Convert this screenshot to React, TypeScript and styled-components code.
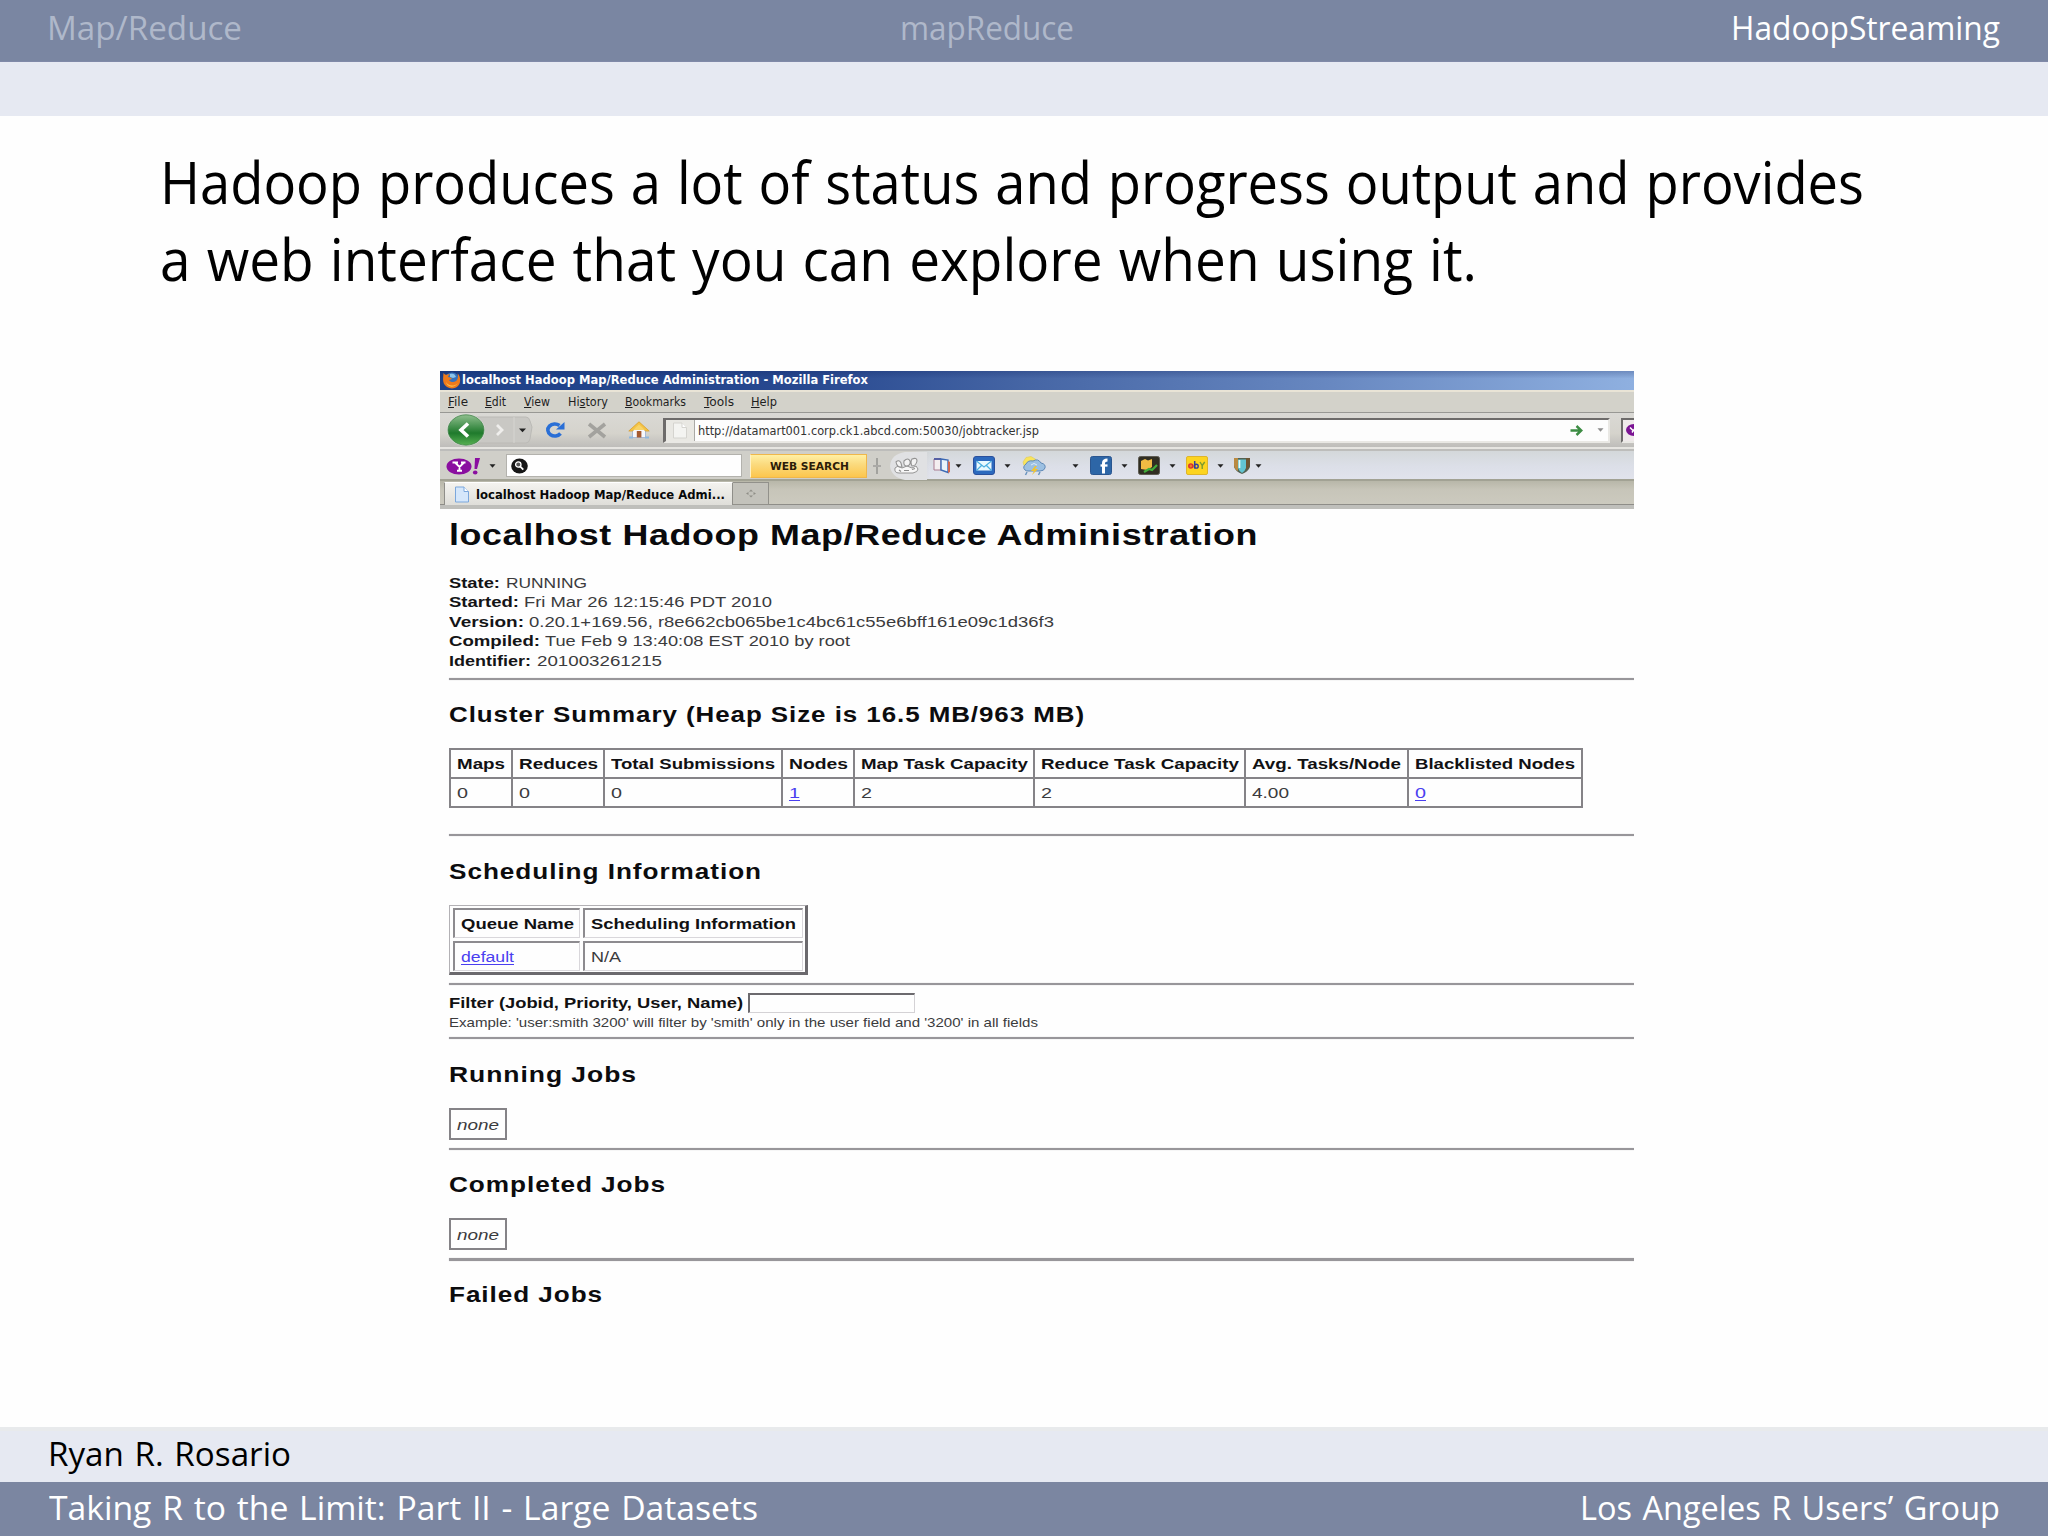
import React, { useLayoutEffect, useRef, useState } from 'react';
import styled, { createGlobalStyle, css } from 'styled-components';

const Global = createGlobalStyle`
  html, body { margin: 0; padding: 0; background: #fefefe; }
  body { overflow: hidden; }
  *, *::before, *::after { box-sizing: border-box; }
`;

/* ---------- text stretched to a set measure ---------- */

const Measure = styled.span<{ $w: number; $gap?: number }>`
  display: inline-block;
  flex: none;
  width: ${p => p.$w}px;
  margin-left: ${p => p.$gap ?? 0}px;
  white-space: pre;
  text-align: left;
`;
const Stretch = styled.span`
  display: inline-block;
  transform-origin: 0 50%;
`;

function Fit({ w, gap, children }: { w: number; gap?: number; children: React.ReactNode }) {
  const ref = useRef<HTMLSpanElement>(null);
  const [scale, setScale] = useState(1);
  useLayoutEffect(() => {
    if (!ref.current) return;
    const natural = parseFloat(getComputedStyle(ref.current).width);
    if (natural > 0) setScale(w / natural);
  }, [w]);
  return (
    <Measure $w={w} $gap={gap}>
      <Stretch ref={ref} style={{ transform: `scaleX(${scale})` }}>{children}</Stretch>
    </Measure>
  );
}

/* ---------- slide ---------- */

const Slide = styled.div`
  width: 2048px;
  height: 1536px;
  display: flex;
  flex-direction: column;
  overflow: hidden;
  background: #fefefe;
  color: #000;
  font-family: 'Open Sans', 'Noto Sans', sans-serif;
  word-spacing: 0.12em;
`;
const bar = css`
  flex: none;
  display: flex;
  align-items: center;
  font-size: 32px;
  line-height: 46px;
`;
const HeaderBar = styled.header`
  ${bar}
  height: 62px;
  padding: 0 48px 5px 47px;
  background: #7a86a2;
  border-bottom: 1px solid #8089a8;
  color: #fff;
`;
const Section = styled.span<{ $dim?: boolean }>`
  display: flex;
  margin-left: auto;
  color: ${p => (p.$dim ? '#afb8ca' : '#fff')};
  &:first-child { margin-left: 0; }
`;
const SubBar = styled.div`
  flex: none;
  height: 54px;
  background: #e6e9f2;
`;
const Main = styled.main`
  flex: 1;
  display: flex;
  flex-direction: column;
`;
const Lead = styled.p`
  margin: 27px 0 0 160px;
  height: 153px;
  font-size: 58px;
  line-height: 77px;
  display: flex;
  flex-direction: column;
`;
const AuthorBar = styled.div`
  ${bar}
  height: 55px;
  padding: 0 48px 6px;
  background: #e6e9f2;
  border-top: 4px solid #e8eaec;
`;
const FooterBar = styled.footer`
  ${bar}
  height: 54px;
  padding: 0 48px 2px 49px;
  justify-content: space-between;
  background: #7b86a1;
  color: #fff;
`;

/* ---------- browser window ---------- */

const Browser = styled.section`
  flex: none;
  width: 1194px;
  margin: 75px 0 0 440px;
  display: flex;
  flex-direction: column;
  overflow: hidden;
  font-family: 'DejaVu Sans', sans-serif;
  font-size: 12px;
  word-spacing: 0;
`;
const TitleBar = styled.div`
  height: 19px;
  display: flex;
  align-items: center;
  padding-bottom: 1px;
  background: linear-gradient(180deg, rgba(10, 30, 90, 0.25), transparent 40%),
    linear-gradient(90deg, #1e4189 0%, #27488f 30%, #4767a6 50%, #6787c0 74%, #8fb0e0 100%);
  color: #fff;
  font-weight: bold;
  font-size: 11.5px;
  line-height: 18px;
`;
const MenuBar = styled.nav`
  height: 23px;
  display: flex;
  align-items: center;
  padding-bottom: 1px;
  background: #d3d2ca;
  border-top: 2px solid #e9e4d6;
  border-bottom: 1px solid #989894;
  color: #1e1e1e;
  line-height: 18px;
  u { text-decoration-thickness: 1px; text-underline-offset: 1px; }
`;
const NavBar = styled.div`
  height: 36px;
  display: flex;
  align-items: center;
  background: linear-gradient(180deg, #dad9d5 0%, #d5d3cc 60%, #bebdba 100%);
  border-bottom: 2px solid #e6e5e1;
`;
const Slot = styled.span<{ $w: number; $gap?: number }>`
  flex: none;
  width: ${p => p.$w}px;
  margin-left: ${p => p.$gap ?? 0}px;
  display: flex;
  align-items: center;
  svg { display: block; }
`;
const field = css`
  flex: none;
  display: flex;
  align-items: center;
  background: #fdfdfd;
  border: 2px solid #6d6b6a;
  border-right-color: #e9e8e4;
  border-bottom-color: #e9e8e4;
`;
const UrlField = styled.div`
  ${field}
  width: 947px;
  height: 25px;
  margin-left: 4px;
  border-left-width: 3px;
  color: #333;
  font-size: 12px;
  line-height: 18px;
`;
const UrlText = styled.span`
  display: flex;
  padding-top: 2px;
`;
const SiteIcon = styled.span`
  width: 29px;
  height: 100%;
  display: flex;
  align-items: center;
  justify-content: center;
  background: #e9e8e3;
  border-right: 1px solid #aaa9a5;
`;
const SideField = styled.div`
  ${field}
  width: 60px;
  height: 25px;
  margin-left: 11px;
  background: #efe9ea;
`;
const SearchBar = styled.div`
  height: 32px;
  display: flex;
  align-items: center;
  padding-top: 1px;
  background: linear-gradient(90deg, #d0cfc9 0, #d0cfc9 470px, transparent 490px),
    linear-gradient(180deg, #d4d8da 0%, #dcdfe8 55%, #e1e3ec 100%);
  border-top: 2px solid #bdbdbb;
  border-bottom: 2px solid #a2a294;
`;
const SearchField = styled.div`
  width: 236px;
  height: 23px;
  margin-left: 7px;
  padding-left: 4px;
  display: flex;
  align-items: center;
  background: #fefefe;
  border: 1px solid #b3b2ad;
`;
const SearchButton = styled.div`
  width: 117px;
  height: 24px;
  margin-left: 8px;
  padding-left: 2px;
  display: flex;
  align-items: center;
  justify-content: center;
  background: linear-gradient(180deg, #fff0a4 0%, #fbdb80 40%, #fcc64d 100%);
  border: 1px solid #efb74b;
  border-left-color: #fff1c5;
  color: #2b1c09;
  font-weight: bold;
  font-size: 10.5px;
  line-height: 20px;
`;
const TabStrip = styled.div`
  height: 28px;
  display: flex;
  align-items: flex-end;
  padding-left: 4px;
  background: linear-gradient(180deg, #b8b7a9 0%, #c7c5b9 35%, #cccabf 100%);
  border-bottom: 4px solid #bfbfbb;
  box-shadow: inset 0 -1px 0 #8e8d88;
`;
const Tab = styled.div`
  width: 289px;
  height: 23px;
  padding: 1px 0 0 9px;
  display: flex;
  align-items: center;
  background: linear-gradient(180deg, #f4f3ef 0%, #dfded9 100%);
  border: 1px solid #8f8e89;
  border-bottom: 0;
  border-top-color: #fff;
  color: #080808;
  font-weight: bold;
  font-size: 11.5px;
  line-height: 18px;
`;
const NewTab = styled.div`
  width: 36px;
  height: 23px;
  display: flex;
  align-items: center;
  justify-content: center;
  background: #c3c2bb;
  border: 1px solid #92918b;
  border-left: 0;
`;

/* ---------- Hadoop page ---------- */

const Page = styled.div`
  padding: 9px 0 0 9px;
  display: flex;
  flex-direction: column;
  align-items: flex-start;
  background: #fefefe;
  color: #3b3b3d;
  font-family: 'Liberation Sans', Arial, sans-serif;
  font-size: 15.5px;
`;
const H1 = styled.h1`
  margin: 0;
  height: 34px;
  line-height: 34px;
  font-size: 30px;
  letter-spacing: 0.5px;
  color: #0a0a0c;
`;
const H2 = styled.h2<{ $top: number }>`
  margin: ${p => p.$top}px 0 0;
  height: 28px;
  line-height: 28px;
  font-size: 22px;
  letter-spacing: 0.8px;
  color: #0c0c0e;
`;
const Facts = styled.div`
  margin-top: 21px;
  height: 97px;
  display: grid;
  grid-auto-rows: 19.4px;
  line-height: 19.4px;
`;
const Fact = styled.div`
  display: flex;
  b { color: #141416; }
`;
const Rule = styled.hr<{ $top: number; $h?: number }>`
  align-self: stretch;
  margin: ${p => p.$top}px 0 0;
  height: ${p => p.$h ?? 2}px;
  border: 0;
  background: #98969a;
  box-shadow: 0 0 1px #aaa8ac;
`;
const Summary = styled.table`
  margin-top: 19px;
  width: 1133px;
  height: 59px;
  table-layout: fixed;
  border-collapse: collapse;
  border: 2px solid #858387;
  th, td {
    padding: 0 0 0 6px;
    border: 2px solid #858387;
    text-align: left;
    line-height: 20px;
    height: 29px;
  }
  th { color: #111113; }
`;
const Col = styled.col<{ $w: number }>`
  width: ${p => p.$w}px;
`;
const Link = styled.a`
  color: #4a3ff0;
  text-decoration: underline;
  text-decoration-thickness: 1px;
  text-underline-offset: 2px;
`;
const Queues = styled.div`
  margin-top: 19px;
  width: 359px;
  height: 70px;
  display: grid;
  grid-template-columns: 127px 220px;
  grid-template-rows: 30px 30px;
  gap: 3px;
  padding: 2px 3px;
  border: 1px solid #b3b1b5;
  border-right: 3px solid #6b696d;
  border-bottom: 3px solid #6b696d;
`;
const QueueCell = styled.div<{ $head?: boolean }>`
  display: flex;
  align-items: center;
  padding: 1px 0 0 6px;
  border: 1px solid #d9d7db;
  border-top: 2px solid #8d8b8f;
  border-left: 2px solid #8d8b8f;
  line-height: 20px;
  ${p => p.$head && css`color: #111113; font-weight: bold;`}
`;
const FilterRow = styled.div`
  margin-top: 8px;
  height: 20px;
  display: flex;
  line-height: 20px;
  font-weight: bold;
  color: #111113;
`;
const FilterInput = styled.span`
  width: 167px;
  height: 20px;
  margin-left: 5px;
  border: 1px solid #d4d2d5;
  border-top: 2px solid #6c6a6e;
  border-left: 2px solid #6c6a6e;
`;
const Hint = styled.div`
  margin-top: 1px;
  height: 18px;
  line-height: 18px;
  font-size: 13.3px;
`;
const EmptyBox = styled.div`
  margin-top: 19px;
  width: 58px;
  height: 32px;
  padding: 0 0 0 6px;
  border: 2px solid #858387;
  line-height: 29px;
  font-style: italic;
`;

/* ---------- icons ---------- */

const Caret = ({ color = '#222' }: { color?: string }) => (
  <svg width="7" height="4" viewBox="0 0 7 4"><path d="M0.5 0.3h6L3.5 3.8z" fill={color} /></svg>
);
const FirefoxIcon = () => (
  <svg width="19" height="18" viewBox="0 0 19 18">
    <circle cx="10" cy="8.6" r="7.2" fill="#3672bd" />
    <path d="M8 3c3-1 5 0 6 3l-3 1-3-1z" fill="#8cc4ea" />
    <path d="M1.500 2C1 8 0 13 5 16c5 3 12 1 13-5 .6-4-.6-7-2.500-8.500 1 3 .5 6-1.500 7.500-2.500 2-6 1-7-1l3-1c-1-2-3-1.500-4-2 0-1 1-2 2-2.500C6 3 5 3.500 4 4 3 3.500 2.500 3 1.500 2z" fill="#ee7a1c" />
    <path d="M4 11c2 4 8 5 12 1-3 5-11 5-12-1z" fill="#fdc04b" />
  </svg>
);
const BackForward = () => (
  <svg width="88" height="34" viewBox="0 0 88 34">
    <defs>
      <linearGradient id="back" x1="0" y1="0" x2="0" y2="1">
        <stop offset="0" stopColor="#8fbf8e" />
        <stop offset=".45" stopColor="#3b8b45" />
        <stop offset=".6" stopColor="#1f7a2c" />
        <stop offset="1" stopColor="#57b052" />
      </linearGradient>
    </defs>
    <path d="M30 4h50q3 0 4 4l2 6-2 12q-1 4-4 4H30z" fill="#c9c8c4" stroke="#bbbab6" />
    <path d="M68 4v26" stroke="#d6d5d1" />
    <ellipse cx="20" cy="17" rx="19" ry="16" fill="#e2e5df" />
    <ellipse cx="20" cy="17" rx="18" ry="15.200" fill="url(#back)" stroke="#43814a" strokeWidth=".8" />
    <path d="M22 10.500l-7 6.500 7 6.500" fill="none" stroke="#fff" strokeWidth="3.600" />
    <path d="M51 12l5 5-5 5" fill="none" stroke="#efeeec" strokeWidth="2.800" />
    <path d="M73 15.500h7l-3.500 3.800z" fill="#222" />
  </svg>
);
const ReloadIcon = () => (
  <svg width="22" height="18" viewBox="0 0 22 18">
    <path d="M15.500 12.500A7 6 0 1 1 14.500 4.500" fill="none" stroke="#2a6fd6" strokeWidth="3.600" />
    <path d="M11 8.500h8.500V1z" fill="#2a6fd6" />
  </svg>
);
const StopIcon = () => (
  <svg width="20" height="17" viewBox="0 0 20 17">
    <path d="M2 2l16 13M18 2L2 15" stroke="#a3a29e" strokeWidth="3.600" />
  </svg>
);
const HomeIcon = () => (
  <svg width="22" height="18" viewBox="0 0 22 18">
    <path d="M4.500 8h13v8.500h-13z" fill="#f7f8fc" stroke="#a9bad6" />
    <path d="M11 0.800L0.800 10h3.500L11 4.800 17.700 10h3.500z" fill="#f5c445" stroke="#d9a02c" strokeWidth=".8" />
    <path d="M11 3.500L5 9h12z" fill="#f8d469" />
    <path d="M8.800 10h4.600v6.500H8.800z" fill="#a65a30" />
    <path d="M1 16.500h4M17 16.500h4" stroke="#8fb7dd" strokeWidth="2" />
  </svg>
);
const SheetIcon = ({ fill, stroke }: { fill: string; stroke: string }) => (
  <svg width="16" height="17" viewBox="0 0 16 17">
    <path d="M1.500 1h8.500l4.500 4.500V16h-13z" fill={fill} stroke={stroke} />
    <path d="M10 1v4.500h4.500" fill="#fff" stroke={stroke} />
  </svg>
);
const GoIcon = () => (
  <svg width="13" height="11" viewBox="0 0 13 11">
    <path d="M0.500 5.500H10M6.500 1l4.800 4.500L6.500 10" fill="none" stroke="#3c8c43" strokeWidth="2.400" />
  </svg>
);
const YBadge = () => (
  <svg width="18" height="12" viewBox="0 0 18 12">
    <ellipse cx="9" cy="6" rx="8" ry="6" fill="#7b1393" />
    <path d="M5 3.500l3 3M11 3L7 8.500" stroke="#fff" strokeWidth="1.500" />
  </svg>
);
const YahooIcon = () => (
  <svg width="36" height="18" viewBox="0 0 36 18">
    <ellipse cx="13" cy="9.500" rx="12.500" ry="8" fill="#8a0ea0" />
    <path d="M6.500 5.500h5.500M15 5.500h4.500M9 5.500l4.500 4.500 4.500-4.500M13.500 9.500v4M11 13.700h5" fill="none" stroke="#fff" strokeWidth="1.900" />
    <path d="M29 1h5l-3 11h-2.500z" fill="#8a0ea0" />
    <ellipse cx="29.200" cy="15.500" rx="2.300" ry="2" fill="#8a0ea0" />
  </svg>
);
const MagnifierIcon = () => (
  <svg width="17" height="16" viewBox="0 0 17 16">
    <ellipse cx="8.500" cy="8" rx="8.300" ry="7.500" fill="#161616" />
    <circle cx="7.300" cy="6.500" r="2.700" fill="#555" stroke="#fff" strokeWidth="1.300" />
    <path d="M9.300 8.700l3 3" stroke="#fff" strokeWidth="1.800" />
  </svg>
);
const GripIcon = () => (
  <svg width="10" height="18" viewBox="0 0 10 18">
    <path d="M5 1v16" stroke="#8f8f8c" strokeWidth="1.400" /><path d="M1 9h8" stroke="#aaa9a6" strokeWidth="2" />
  </svg>
);
const PencilIcon = () => (
  <svg width="37" height="28" viewBox="0 0 37 28">
    <path d="M37 0H15Q1 2 0 14q1 11 15 14h22z" fill="#e0e1e3" />
    <path d="M5 16q-1 5 4 5h14q5-1 5-4l-2-3-4 2-5-2-5 2-4-2z" fill="#f7f7f7" stroke="#949494" />
    <path d="M6 10q3-3 5 1l1 4q-5 1-6-5zM14 9q4-4 6 0 1 4-3 5-4 0-3-5zM22 7q5-2 5 2-1 5-5 5-2-4 0-7z" fill="#f3f3f3" stroke="#929292" strokeWidth="1.100" />
    <path d="M9 18l2 1.500M14 18.500h5M22 17.500l3-1" fill="none" stroke="#8c8c8c" strokeWidth="1.200" />
  </svg>
);
const BookIcon = () => (
  <svg width="18" height="17" viewBox="0 0 18 17">
    <path d="M1 2h7v11H1z" fill="#f4eef0" stroke="#a97c91" />
    <path d="M1 2h7" stroke="#5660a4" strokeWidth="2" />
    <path d="M8 2l7 1v12.500l-7-2.500z" fill="#e9f3fb" stroke="#3c69b4" strokeWidth="1.400" />
    <path d="M15 4l2 1v10l-2 1z" fill="#d2684f" />
  </svg>
);
const MailIcon = () => (
  <svg width="22" height="19" viewBox="0 0 22 19">
    <rect x=".5" y=".5" width="21" height="18" rx="2.500" fill="#2c69be" stroke="#2a509c" />
    <path d="M3.500 5h15v9.500h-15z" fill="#eafaff" />
    <path d="M3.500 5l7.500 6 7.500-6M3.500 14.500l5-5M18.500 14.500l-5-5" fill="none" stroke="#4bb0e0" strokeWidth="1.200" />
  </svg>
);
const WeatherIcon = () => (
  <svg width="24" height="20" viewBox="0 0 24 20">
    <path d="M1 6l3-4.500 5-1 5 3-5 5-7 1z" fill="#f9e45c" stroke="#ddc957" strokeWidth=".6" />
    <path d="M3 14q-3-3 1-6 2-4 7-3 5-3 8 2 5 1 4 5-1 3-5 3H6q-2 0-3-1z" fill="#9cc0e2" stroke="#6089b6" />
    <path d="M9 9q3-3 6 0" fill="none" stroke="#dcebf7" />
    <path d="M13 10l-4 5h3l-2 4 6-6h-3l2-3z" fill="#f0c434" />
    <path d="M5 16l-1.500 3M18 16l-1.500 3" stroke="#6b95bf" strokeWidth="1.500" />
  </svg>
);
const FacebookIcon = () => (
  <svg width="22" height="19" viewBox="0 0 22 19">
    <rect x=".5" y=".5" width="21" height="18" rx="2" fill="#2d66a7" stroke="#2a5690" />
    <path d="M13.500 17.500V7q0-3 4-3" fill="none" stroke="#fff" strokeWidth="3" />
    <path d="M10.500 9.500h7" stroke="#fff" strokeWidth="2.300" />
  </svg>
);
const FinanceIcon = () => (
  <svg width="22" height="19" viewBox="0 0 22 19">
    <rect x=".5" y=".5" width="21" height="18" rx="2" fill="#302e22" stroke="#5d5b52" />
    <path d="M3 5l4-2 3 1.500L14 3v8l-5 3-6-1z" fill="#f1bb43" />
    <path d="M6 16l5-3 3 1 5-5" fill="none" stroke="#41ad3a" strokeWidth="2.200" />
  </svg>
);
const EbayIcon = () => (
  <svg width="22" height="19" viewBox="0 0 22 19">
    <rect x=".5" y=".5" width="21" height="18" rx="1.500" fill="#fcd41f" stroke="#dfb52a" />
    <circle cx="4.800" cy="10" r="2" fill="none" stroke="#dc3030" strokeWidth="1.500" /><path d="M3 10h3.500" stroke="#dc3030" />
    <path d="M8.700 5v7.500" stroke="#313f9f" strokeWidth="1.500" /><circle cx="10.300" cy="10.200" r="1.900" fill="none" stroke="#313f9f" strokeWidth="1.400" />
    <path d="M14 6l2.200 3.500L18.700 6M16.200 9v4" fill="none" stroke="#7b9b30" strokeWidth="1.400" />
  </svg>
);
const ShieldIcon = () => (
  <svg width="18" height="17" viewBox="0 0 18 17">
    <path d="M1 1h16v9q-2 5-8 7-6-2-8-7z" fill="#536252" />
    <path d="M1 1h4v13q-4-2-4-6z" fill="#b98a42" />
    <path d="M5 2.500h8V11q-1 3-4 5-3-2-4-5z" fill="#62c5d2" />
    <path d="M6.500 3v8" stroke="#e8fbf8" strokeWidth="1.700" />
    <path d="M13 1h4v7q-1 3-4 5z" fill="#6d5633" />
  </svg>
);
const PlusIcon = () => (
  <svg width="12" height="9" viewBox="0 0 12 9">
    <path d="M6 .5l2 2H4zM6 8.500l2-2H4zM1 4.500l2.500-1.500v3zM11 4.500L8.500 3v3z" fill="#8f8e87" />
  </svg>
);

/* ---------- data ---------- */

const facts = [
  { label: 'State:', lw: 51, value: 'RUNNING', gap: 6, vw: 81 },
  { label: 'Started:', lw: 70, value: 'Fri Mar 26 12:15:46 PDT 2010', gap: 5, vw: 248 },
  { label: 'Version:', lw: 75, value: '0.20.1+169.56, r8e662cb065be1c4bc61c55e6bff161e09c1d36f3', gap: 5, vw: 525 },
  { label: 'Compiled:', lw: 91, value: 'Tue Feb 9 13:40:08 EST 2010 by root', gap: 5, vw: 305 },
  { label: 'Identifier:', lw: 82, value: '201003261215', gap: 6, vw: 125 },
];
const columns = [
  { name: 'Maps', col: 62, w: 48, value: '0' },
  { name: 'Reduces', col: 92, w: 79, value: '0' },
  { name: 'Total Submissions', col: 178, w: 164, value: '0' },
  { name: 'Nodes', col: 72, w: 59, value: '1', link: true },
  { name: 'Map Task Capacity', col: 180, w: 167, value: '2' },
  { name: 'Reduce Task Capacity', col: 211, w: 198, value: '2' },
  { name: 'Avg. Tasks/Node', col: 163, w: 149, value: '4.00' },
  { name: 'Blacklisted Nodes', col: 174, w: 160, value: '0', link: true },
];
const menus = [
  { pre: '', key: 'F', post: 'ile', gap: 8, w: 20 },
  { pre: '', key: 'E', post: 'dit', gap: 17, w: 21 },
  { pre: '', key: 'V', post: 'iew', gap: 18, w: 26 },
  { pre: 'Hi', key: 's', post: 'tory', gap: 18, w: 40 },
  { pre: '', key: 'B', post: 'ookmarks', gap: 17, w: 61 },
  { pre: '', key: 'T', post: 'ools', gap: 18, w: 30 },
  { pre: '', key: 'H', post: 'elp', gap: 17, w: 26 },
];

export default function App() {
  return (
    <>
      <Global />
      <Slide>
        <HeaderBar>
          <Section $dim><Fit w={195}>Map/Reduce</Fit></Section>
          <Section $dim><Fit w={174}>mapReduce</Fit></Section>
          <Section><Fit w={269}>HadoopStreaming</Fit></Section>
        </HeaderBar>
        <SubBar />
        <Main>
          <Lead>
            <Fit w={1704}>Hadoop produces a lot of status and progress output and provides</Fit>
            <Fit w={1317}>a web interface that you can explore when using it.</Fit>
          </Lead>
          <Browser>
            <TitleBar>
              <Slot $w={19} $gap={2}><FirefoxIcon /></Slot>
              <Fit w={406} gap={1}>localhost Hadoop Map/Reduce Administration - Mozilla Firefox</Fit>
            </TitleBar>
            <MenuBar>
              {menus.map(m => (
                <Fit key={m.key + m.post} w={m.w} gap={m.gap}>{m.pre}<u>{m.key}</u>{m.post}</Fit>
              ))}
            </MenuBar>
            <NavBar>
              <Slot $w={88} $gap={6}><BackForward /></Slot>
              <Slot $w={22} $gap={11}><ReloadIcon /></Slot>
              <Slot $w={20} $gap={20}><StopIcon /></Slot>
              <Slot $w={22} $gap={21}><HomeIcon /></Slot>
              <Slot $w={9} />
              <UrlField>
                <SiteIcon><SheetIcon fill="#f4f4f1" stroke="#d5d4cf" /></SiteIcon>
                <UrlText><Fit w={341} gap={3}>http://datamart001.corp.ck1.abcd.com:50030/jobtracker.jsp</Fit></UrlText>
                <Slot $w={13} $gap={531}><GoIcon /></Slot>
                <Slot $w={7} $gap={14}><Caret color="#8d8d8d" /></Slot>
              </UrlField>
              <SideField><Slot $w={18} $gap={2}><YBadge /></Slot></SideField>
            </NavBar>
            <SearchBar>
              <Slot $w={36} $gap={6}><YahooIcon /></Slot>
              <Slot $w={7} $gap={7}><Caret /></Slot>
              <Slot $w={3} />
              <SearchField><MagnifierIcon /></SearchField>
              <SearchButton><Fit w={79}>WEB SEARCH</Fit></SearchButton>
              <Slot $w={10} $gap={5}><GripIcon /></Slot>
              <Slot $w={37} $gap={8}><PencilIcon /></Slot>
              <Slot $w={18} $gap={6}><BookIcon /></Slot>
              <Slot $w={7} $gap={4}><Caret /></Slot>
              <Slot $w={22} $gap={11}><MailIcon /></Slot>
              <Slot $w={7} $gap={9}><Caret /></Slot>
              <Slot $w={24} $gap={11}><WeatherIcon /></Slot>
              <Slot $w={7} $gap={26}><Caret /></Slot>
              <Slot $w={22} $gap={11}><FacebookIcon /></Slot>
              <Slot $w={7} $gap={9}><Caret /></Slot>
              <Slot $w={22} $gap={10}><FinanceIcon /></Slot>
              <Slot $w={7} $gap={9}><Caret /></Slot>
              <Slot $w={22} $gap={10}><EbayIcon /></Slot>
              <Slot $w={7} $gap={9}><Caret /></Slot>
              <Slot $w={18} $gap={9}><ShieldIcon /></Slot>
              <Slot $w={7} $gap={4}><Caret /></Slot>
            </SearchBar>
            <TabStrip>
              <Tab>
                <Slot $w={16}><SheetIcon fill="#d5e7fb" stroke="#7ba7dc" /></Slot>
                <Fit w={249} gap={6}>localhost Hadoop Map/Reduce Admi...</Fit>
              </Tab>
              <NewTab><PlusIcon /></NewTab>
            </TabStrip>
            <Page>
              <H1><Fit w={809}>localhost Hadoop Map/Reduce Administration</Fit></H1>
              <Facts>
                {facts.map(f => (
                  <Fact key={f.label}>
                    <b><Fit w={f.lw}>{f.label}</Fit></b>
                    <Fit w={f.vw} gap={f.gap}>{f.value}</Fit>
                  </Fact>
                ))}
              </Facts>
              <Rule $top={8} />
              <H2 $top={21}><Fit w={636}>Cluster Summary (Heap Size is 16.5 MB/963 MB)</Fit></H2>
              <Summary>
                <colgroup>{columns.map(c => <Col key={c.name} $w={c.col} />)}</colgroup>
                <tbody>
                  <tr>{columns.map(c => <th key={c.name}><Fit w={c.w}>{c.name}</Fit></th>)}</tr>
                  <tr>
                    {columns.map(c => (
                      <td key={c.name}>
                        <Fit w={c.value.length > 1 ? 37 : 11}>{c.link ? <Link>{c.value}</Link> : c.value}</Fit>
                      </td>
                    ))}
                  </tr>
                </tbody>
              </Summary>
              <Rule $top={26} />
              <H2 $top={22}><Fit w={313}>Scheduling Information</Fit></H2>
              <Queues>
                <QueueCell $head><Fit w={113}>Queue Name</Fit></QueueCell>
                <QueueCell $head><Fit w={205}>Scheduling Information</Fit></QueueCell>
                <QueueCell><Fit w={53}><Link>default</Link></Fit></QueueCell>
                <QueueCell><Fit w={30}>N/A</Fit></QueueCell>
              </Queues>
              <Rule $top={8} />
              <FilterRow>
                <Fit w={294}>Filter (Jobid, Priority, User, Name)</Fit>
                <FilterInput />
              </FilterRow>
              <Hint><Fit w={589}>Example: 'user:smith 3200' will filter by 'smith' only in the user field and '3200' in all fields</Fit></Hint>
              <Rule $top={5} />
              <H2 $top={22}><Fit w={188}>Running Jobs</Fit></H2>
              <EmptyBox><Fit w={42}>none</Fit></EmptyBox>
              <Rule $top={8} />
              <H2 $top={21}><Fit w={217}>Completed Jobs</Fit></H2>
              <EmptyBox><Fit w={42}>none</Fit></EmptyBox>
              <Rule $top={8} $h={3} />
              <H2 $top={20}><Fit w={154}>Failed Jobs</Fit></H2>
            </Page>
          </Browser>
        </Main>
        <AuthorBar><Fit w={243}>Ryan R. Rosario</Fit></AuthorBar>
        <FooterBar>
          <Fit w={709}>Taking R to the Limit: Part II - Large Datasets</Fit>
          <Fit w={420}>Los Angeles R Users’ Group</Fit>
        </FooterBar>
      </Slide>
    </>
  );
}
